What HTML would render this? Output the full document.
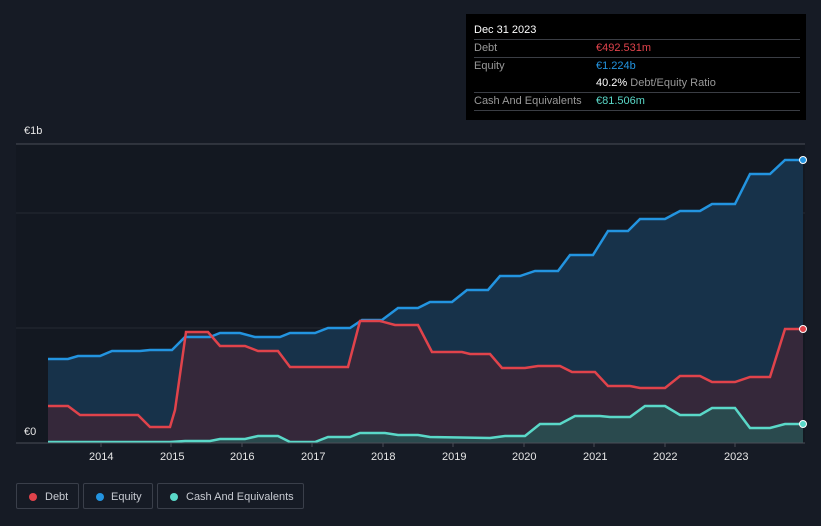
<!DOCTYPE html>
<html><head><style>
body{margin:0;width:821px;height:526px;background:#161b25;font-family:"Liberation Sans",sans-serif;overflow:hidden;position:relative;color:#fff}
.tip{position:absolute;left:466px;top:14px;width:340px;height:106px;background:#000;}
.tip .r{position:absolute;left:8px;width:326px;font-size:11px;border-bottom:1px solid #3a3d44;height:17px;line-height:17px}
.lg{position:absolute;top:483px;height:26px;border:1px solid #3a3f4a;border-radius:2px;font-size:11px;color:#c8cbd2;line-height:26px;box-sizing:border-box}
.lg i{position:absolute;top:9px;width:8px;height:8px;border-radius:50%}
.ax{position:absolute;font-size:11px;color:#e6e6e6}
</style></head><body>
<svg width="821" height="526" style="position:absolute;left:0;top:0">
<rect x="16" y="144" width="789" height="299" fill="#131821"/>
<line x1="16" y1="144" x2="805" y2="144" stroke="#4a4e57"/>
<line x1="16" y1="213" x2="805" y2="213" stroke="#262a33"/>
<line x1="16" y1="328" x2="805" y2="328" stroke="#262a33"/>
<path d="M48,359 L68,359 78,356 100,356 112,351 140,351 150,350 172,350 185,337 210,337 220,333 240,333 255,337 280,337 290,333 315,333 328,328 350,328 362,320 382,320 398,308 418,308 430,302 452,302 467,290 488,290 500,276 520,276 535,271 558,271 570,255 593,255 608,231 628,231 640,219 665,219 680,211 700,211 712,204 735,204 750,174 770,174 785,160 803,160 L803,443 L48,443Z" fill="#17324a"/>
<path d="M48,406 L68,406 80,415 138,415 150,427 170,427 175,410 186,332 208,332 220,346 245,346 258,351 278,351 290,367 348,367 360,321 380,321 395,325 418,325 432,352 462,352 470,354 490,354 502,368 525,368 538,366 560,366 572,372 595,372 608,386 630,386 640,388 665,388 680,376 700,376 712,382 735,382 750,377 770,377 785,329 803,329 L803,443 L48,443Z" fill="#35283a"/>
<path d="M48,442 L170,442 185,441 210,441 220,439 245,439 258,436 278,436 290,442 315,442 328,437 350,437 360,433 385,433 398,435 418,435 430,437 490,438 505,436 525,436 540,424 560,424 575,416 600,416 610,417 630,417 645,406 665,406 680,415 700,415 712,408 735,408 750,428 770,428 785,424 803,424 L803,443 L48,443Z" fill="#2a4a4e"/>
<path d="M48,359 L68,359 78,356 100,356 112,351 140,351 150,350 172,350 185,337 210,337 220,333 240,333 255,337 280,337 290,333 315,333 328,328 350,328 362,320 382,320 398,308 418,308 430,302 452,302 467,290 488,290 500,276 520,276 535,271 558,271 570,255 593,255 608,231 628,231 640,219 665,219 680,211 700,211 712,204 735,204 750,174 770,174 785,160 803,160" fill="none" stroke="#2394e0" stroke-width="2.5"/>
<path d="M48,406 L68,406 80,415 138,415 150,427 170,427 175,410 186,332 208,332 220,346 245,346 258,351 278,351 290,367 348,367 360,321 380,321 395,325 418,325 432,352 462,352 470,354 490,354 502,368 525,368 538,366 560,366 572,372 595,372 608,386 630,386 640,388 665,388 680,376 700,376 712,382 735,382 750,377 770,377 785,329 803,329" fill="none" stroke="#e0434b" stroke-width="2.5"/>
<path d="M48,442 L170,442 185,441 210,441 220,439 245,439 258,436 278,436 290,442 315,442 328,437 350,437 360,433 385,433 398,435 418,435 430,437 490,438 505,436 525,436 540,424 560,424 575,416 600,416 610,417 630,417 645,406 665,406 680,415 700,415 712,408 735,408 750,428 770,428 785,424 803,424" fill="none" stroke="#5ad8c8" stroke-width="2.5"/>
<line x1="16" y1="443" x2="805" y2="443" stroke="#4a4e57"/>
<g stroke="#4a4e57"><line x1="101" y1="443" x2="101" y2="447"/><line x1="171" y1="443" x2="171" y2="447"/><line x1="242" y1="443" x2="242" y2="447"/><line x1="312" y1="443" x2="312" y2="447"/><line x1="383" y1="443" x2="383" y2="447"/><line x1="453" y1="443" x2="453" y2="447"/><line x1="524" y1="443" x2="524" y2="447"/><line x1="594" y1="443" x2="594" y2="447"/><line x1="665" y1="443" x2="665" y2="447"/><line x1="735" y1="443" x2="735" y2="447"/></g>
<circle cx="803" cy="160" r="3.5" fill="#2394e0" stroke="#fff" stroke-width="1"/>
<circle cx="803" cy="329" r="3.5" fill="#e0434b" stroke="#fff" stroke-width="1"/>
<circle cx="803" cy="424" r="3.5" fill="#5ad8c8" stroke="#fff" stroke-width="1"/>
</svg>
<div class="ax" style="left:24px;top:125px">€1b</div>
<div class="ax" style="left:24px;top:426px">€0</div>
<div class="ax" style="left:89px;top:451px">2014</div>
<div class="ax" style="left:160px;top:451px">2015</div>
<div class="ax" style="left:230px;top:451px">2016</div>
<div class="ax" style="left:301px;top:451px">2017</div>
<div class="ax" style="left:371px;top:451px">2018</div>
<div class="ax" style="left:442px;top:451px">2019</div>
<div class="ax" style="left:512px;top:451px">2020</div>
<div class="ax" style="left:583px;top:451px">2021</div>
<div class="ax" style="left:653px;top:451px">2022</div>
<div class="ax" style="left:724px;top:451px">2023</div>
<div class="tip">
<div class="r" style="top:8px;color:#fff">Dec 31 2023</div>
<div class="r" style="top:26px;color:#999">Debt<span style="position:absolute;left:122px;color:#e0434b">€492.531m</span></div>
<div class="r" style="top:44px;color:#999;border:0">Equity<span style="position:absolute;left:122px;color:#2394e0">€1.224b</span></div>
<div class="r" style="top:61px;color:#999"><span style="position:absolute;left:122px"><b style="color:#fff;font-weight:normal">40.2%</b> Debt/Equity Ratio</span></div>
<div class="r" style="top:79px;color:#999">Cash And Equivalents<span style="position:absolute;left:122px;color:#5ad8c8">€81.506m</span></div>
</div>
<div class="lg" style="left:16px;width:63px"><i style="left:12px;background:#e0434b"></i><span style="position:absolute;left:28px">Debt</span></div>
<div class="lg" style="left:83px;width:70px"><i style="left:12px;background:#2394e0"></i><span style="position:absolute;left:27px">Equity</span></div>
<div class="lg" style="left:157px;width:147px"><i style="left:12px;background:#5ad8c8"></i><span style="position:absolute;left:28px">Cash And Equivalents</span></div>
</body></html>
